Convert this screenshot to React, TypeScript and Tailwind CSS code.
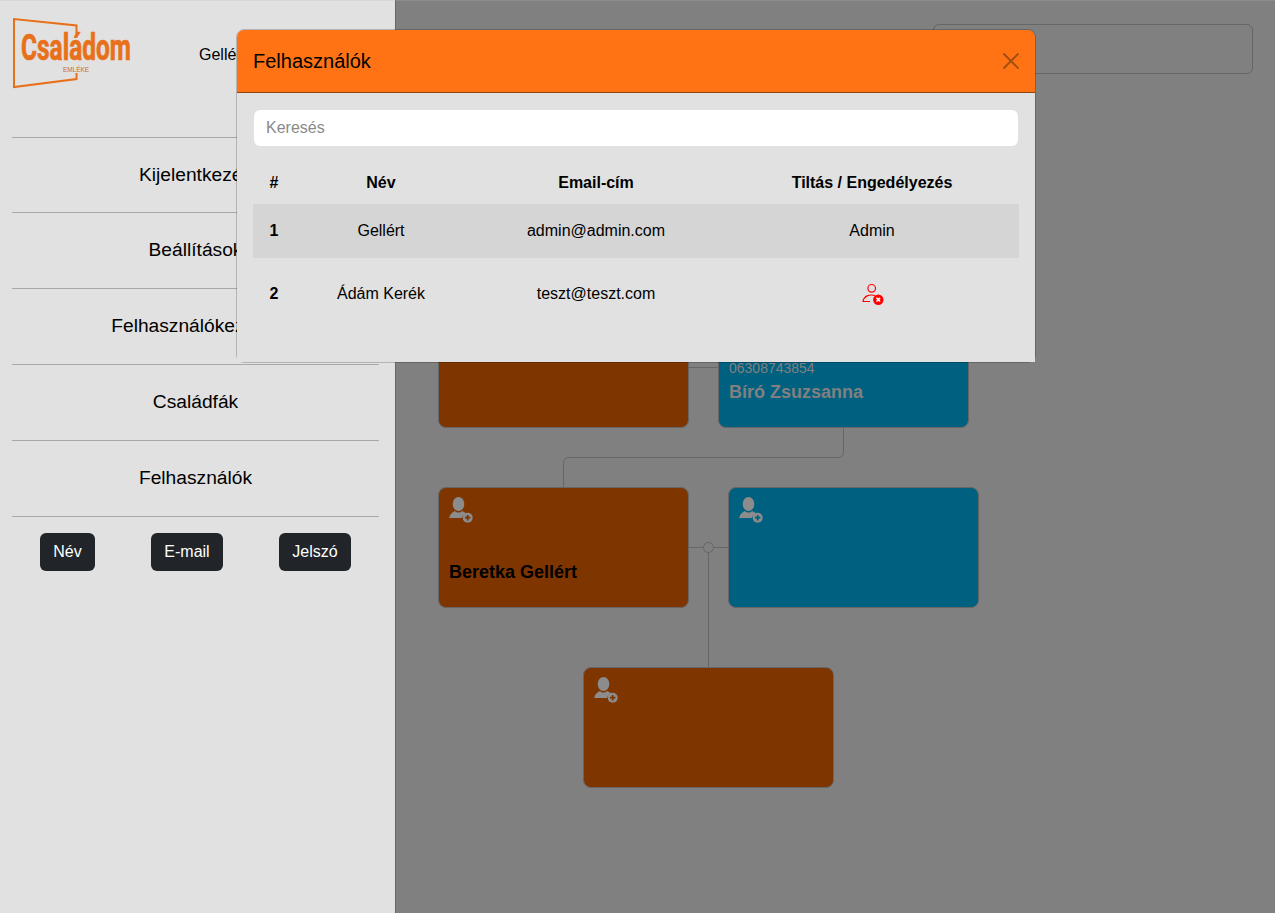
import React from 'react';

const font = { fontFamily: '"Liberation Sans", Arial, sans-serif' };

const UserPlus = ({ ink }: { ink: string }) => (
    <svg width="30" height="30" viewBox="0 0 30 30" className="absolute left-[8px] top-[8px]">
        <ellipse cx="11.500" cy="8" rx="5.800" ry="7" fill="#8c8c8c" />
        <path d="M2.300 22 C3 17.500 5.500 16.500 8 15 C10 17 13 17 15 15 C17 16 19 17 20 18.500 C17.500 18.500 15.500 19.500 15 22 Z" fill="#8c8c8c" />
        <circle cx="20.700" cy="21.700" r="5" fill="#8c8c8c" />
        <path d="M20.700 19 V24.400 M18 21.700 H23.400" stroke={ink} strokeWidth="1.700" />
    </svg>
);

const Card = ({ x, y, tone, children }: { x: number; y: number; tone: 'o' | 'b'; children?: React.ReactNode }) => (
    <div
        className={`absolute w-[251px] h-[121px] rounded-lg border border-[#666] ${tone === 'o' ? 'bg-[#7f3500]' : 'bg-[#006080]'}`}
        style={{ left: x, top: y }}
    >
        {children}
    </div>
);

const Logo = () => (
    <svg width="124" height="74" viewBox="0 0 124 74" className="block overflow-visible">
        <path d="M63.500 15 V7.500 L1 1 V69 L63.500 61 V55" fill="none" stroke="#e8701a" strokeWidth="2" />
        <text x="8" y="42" fontSize="37" fontWeight="700" fill="#e8701a" stroke="#e8701a" strokeWidth="0.700" textLength="110" lengthAdjust="spacingAndGlyphs" style={{ fontFamily: 'Roboto, sans-serif' }}>
            Családom
        </text>
        <text x="50" y="54" fontSize="7" fill="#c96a22" textLength="26" lengthAdjust="spacingAndGlyphs" style={font}>
            EMLÉKE
        </text>
    </svg>
);

const menu = ['Kijelentkezés', 'Beállítások', 'Felhasználókezelés', 'Családfák', 'Felhasználók'];

export default function App() {
    return (
        <div className="relative flex h-[913px] w-[1275px] overflow-hidden bg-[#808080] text-black" style={font}>
            <aside className="w-[395px] h-full shrink-0 bg-[#e1e1e1] pl-3 pr-4 border-t border-[#d8d8d8]">
                <div className="flex h-[136px] items-start">
                    <div className="mt-[17px] ml-[1px]"><Logo /></div>
                    <span className="mt-[42px] ml-[62px] text-base">Gellért</span>
                </div>
                <nav>
                    {menu.map((m) => (
                        <div key={m} className="h-[76px] first:h-[75px] border-t border-[#a8a8a8] flex items-center justify-center pb-[1px] text-[19.200px] leading-none">
                            {m}
                        </div>
                    ))}
                </nav>
                <div className="border-t border-[#a8a8a8] flex pt-4 pl-7">
                    <button className="h-[38px] w-[55px] rounded-[6px] bg-[#212529] text-white text-base">Név</button>
                    <button className="h-[38px] w-[72px] ml-[56px] rounded-[6px] bg-[#212529] text-white text-base">E-mail</button>
                    <button className="h-[38px] w-[72px] ml-[56px] rounded-[6px] bg-[#212529] text-white text-base">Jelszó</button>
                </div>
            </aside>

            <main className="relative flex-1 h-full border-l border-t border-[#666] border-t-[#8c8c8c]">
                {/* coordinates inside the tree canvas */}
                <div className="absolute left-[537px] top-[23px] w-[320px] h-[50px] rounded-[6px] border border-[#666]" />
                <Card x={42} y={306} tone="o" />
                <Card x={322} y={306} tone="b">
                    <div className="absolute left-[10px] top-[50px] text-sm text-[#808080]">06308743854</div>
                    <div className="absolute left-[10px] top-[70px] text-lg font-bold text-[#808080]">Bíró Zsuzsanna</div>
                </Card>
                <Card x={42} y={486} tone="o">
                    <UserPlus ink="#7f3500" />
                    <div className="absolute left-[10px] top-[70px] text-lg font-bold text-black">Beretka Gellért</div>
                </Card>
                <Card x={332} y={486} tone="b"><UserPlus ink="#006080" /></Card>
                <Card x={187} y={666} tone="o"><UserPlus ink="#7f3500" /></Card>
                <svg width="880" height="912" className="absolute left-0 top-0 pointer-events-none" fill="none" stroke="#666">
                    <path d="M293 366.500 H322" />
                    <path d="M447.500 427 V451.500 A5 5 0 0 1 442.500 456.500 H172.500 A5 5 0 0 0 167.500 461.500 V486" />
                    <path d="M293 546.500 H307 M318 546.500 H332 M312.500 552 V666" />
                    <circle cx="312.500" cy="546.500" r="5" />
                </svg>
            </main>

            <div className="absolute left-[236px] top-[29px] w-[800px] h-[334px] rounded-lg border border-black/20">
                <div className="h-[63px] rounded-t-[7px] bg-[#ff7315] border-b border-[#8a4510] flex items-center justify-between pl-4 pr-[15px]">
                    <h1 className="text-xl leading-none">Felhasználók</h1>
                    <svg width="18" height="18" viewBox="0 0 18 18" stroke="#a04e10" strokeWidth="1.800">
                        <path d="M1.500 1.500 L16.500 16.500 M16.500 1.500 L1.500 16.500" />
                    </svg>
                </div>
                <div className="h-[269px] bg-[#e1e1e1] px-4 pt-[17px]">
                    <input
                        readOnly
                        placeholder="Keresés"
                        className="block mx-px w-[764px] h-[36px] rounded-[6px] bg-white px-3 text-base outline-none placeholder:text-[#8a8a8a]"
                    />
                    <table className="mt-[15px] w-[766px] table-fixed text-base text-center">
                        <colgroup>
                            <col className="w-[42px]" />
                            <col className="w-[172px]" />
                            <col className="w-[258px]" />
                            <col />
                        </colgroup>
                        <thead>
                            <tr className="h-[43px] font-bold">
                                <th>#</th>
                                <th>Név</th>
                                <th>Email-cím</th>
                                <th>Tiltás / Engedélyezés</th>
                            </tr>
                        </thead>
                        <tbody>
                            <tr className="h-[54px] bg-[#d5d5d5]">
                                <td className="font-bold">1</td>
                                <td>Gellért</td>
                                <td>admin@admin.com</td>
                                <td>Admin</td>
                            </tr>
                            <tr className="h-[71px]">
                                <td className="font-bold">2</td>
                                <td>Ádám Kerék</td>
                                <td>teszt@teszt.com</td>
                                <td>
                                    <svg width="24" height="24" viewBox="0 0 24 24" className="mx-auto" fill="none">
                                        <circle cx="11.700" cy="6.300" r="3.800" stroke="#f00" strokeWidth="1.200" />
                                        <path d="M15 13.500 C9 12 4 14 3 19.500 H10" stroke="#f00" strokeWidth="1.200" />
                                        <circle cx="18.300" cy="17.700" r="5.200" fill="#f00" />
                                        <path d="M16.500 15.900 L20.100 19.500 M20.100 15.900 L16.500 19.500" stroke="#fff" strokeWidth="1.500" />
                                    </svg>
                                </td>
                            </tr>
                        </tbody>
                    </table>
                </div>
            </div>
        </div>
    );
}
